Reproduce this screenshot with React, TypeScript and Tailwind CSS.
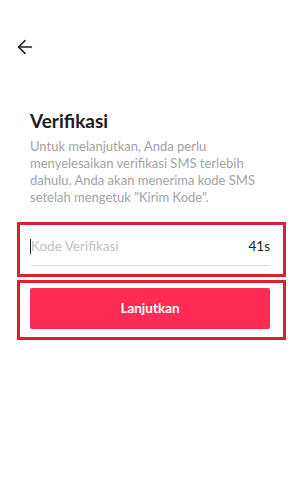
import { ArrowLeft } from 'lucide-react'

export default function App() {
  return (
    <div
      className="w-[300px] h-[500px] bg-white flex flex-col"
      style={{ fontFamily: 'Lato, "Liberation Sans", sans-serif' }}
    >
      {/* Back */}
      <div className="pt-[36px] pl-[14px]">
        <ArrowLeft className="h-[22px] w-[22px] text-[#222226]" strokeWidth={1.7} />
      </div>

      {/* Heading */}
      <div className="px-[30px] mt-[52px]">
        <h1 className="text-[19px] leading-[22px] font-bold text-[#1c1c20]">Verifikasi</h1>
        <p className="mt-[6px] text-[13px] leading-[17px] text-[#a3a3a7] pr-[4px]">
          Untuk melanjutkan, Anda perlu menyelesaikan verifikasi SMS terlebih dahulu. Anda akan menerima kode SMS setelah mengetuk "Kirim Kode".
        </p>
      </div>

      {/* Input */}
      <div className="mt-[16px] ml-[17px] w-[269px] flex flex-col gap-[3px]">
        <div className="h-[55px] border-[3px] border-[#d8222e] pl-[10px] pr-[13px] flex flex-col">
          <div className="flex items-center justify-between h-[40px] pt-[2px]">
            <div className="flex items-center">
              <span className="w-px h-[15px] bg-[#222226]" />
              <span className="text-[13.5px] text-[#c2c2c6]">Kode Verifikasi</span>
            </div>
            <span className="text-[13.5px] text-[#222226]">41s</span>
          </div>
          <div className="h-px bg-[#dcdcde]" />
        </div>

        {/* Button */}
        <div className="h-[60px] border-[3px] border-[#d8222e] pl-[10px] pr-[13px] pt-[5px]">
          <button className="w-full h-[41px] rounded-[2px] bg-[#fe2c55] text-white text-[13.5px] font-bold">
            Lanjutkan
          </button>
        </div>
      </div>
    </div>
  )
}
